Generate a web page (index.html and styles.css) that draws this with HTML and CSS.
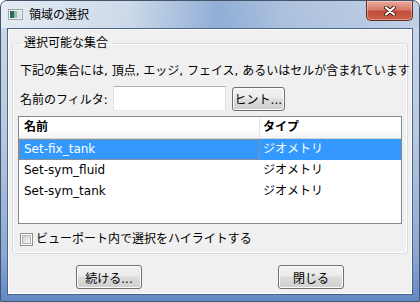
FILE: index.html
```html
<!DOCTYPE html>
<html lang="ja">
<head>
    <meta charset="UTF-8">
    <title>領域の選択</title>
    <link rel="stylesheet" href="styles.css">
</head>
<body>
    <div class="window">
        <div class="titlebar">
            <svg class="app-icon" width="15" height="11" viewBox="0 0 15 11">
                <rect x="0.5" y="0.5" width="14" height="10" fill="#eef1f3" stroke="#9aa5b0"/>
                <rect x="2" y="2" width="4" height="7" fill="#2c6b5a"/>
                <rect x="6" y="2" width="3" height="7" fill="#8fc0a8"/>
                <rect x="9" y="2" width="4" height="7" fill="#dde3e8"/>
            </svg>
            <span class="title">領域の選択</span>
            <button class="close-btn">
                <svg width="14" height="10" viewBox="0 0 14 10">
                    <path d="M3 1.5 L11 8.5 M11 1.5 L3 8.5" stroke="#4a1a14" stroke-width="4" stroke-linecap="round"/>
                    <path d="M3 1.5 L11 8.5 M11 1.5 L3 8.5" stroke="#fff" stroke-width="2.2" stroke-linecap="round"/>
                </svg>
            </button>
        </div>

        <div class="client">
            <!-- Grupo de conjuntos -->
            <fieldset class="group">
                <legend>選択可能な集合</legend>
                <p class="info">下記の集合には, 頂点, エッジ, フェイス, あるいはセルが含まれています</p>
                <div class="filter-row">
                    <label for="filter">名前のフィルタ:</label>
                    <input type="text" id="filter" class="filter-input">
                    <button class="btn btn-hint">ヒント...</button>
                </div>
                <div class="list">
                    <div class="list-header">
                        <div class="col col-name">名前</div>
                        <div class="col col-type">タイプ</div>
                    </div>
                    <div class="list-row selected">
                        <div class="col col-name focus">Set-fix_tank</div>
                        <div class="col col-type">ジオメトリ</div>
                    </div>
                    <div class="list-row">
                        <div class="col col-name">Set-sym_fluid</div>
                        <div class="col col-type">ジオメトリ</div>
                    </div>
                    <div class="list-row">
                        <div class="col col-name">Set-sym_tank</div>
                        <div class="col col-type">ジオメトリ</div>
                    </div>
                </div>
                <label class="check-row">
                    <span class="check"><span class="check-inner"></span></span>
                    <span>ビューポート内で選択をハイライトする</span>
                </label>
            </fieldset>

            <div class="actions">
                <button class="btn">続ける...</button>
                <button class="btn">閉じる</button>
            </div>
        </div>
    </div>
</body>
</html>
```

FILE: styles.css
```css
body {
    margin: 0;
    font-family: "DejaVu Sans", "Noto Sans CJK JP", sans-serif;
    font-size: 12px;
    color: #000;
    background: #fff;
    overflow: hidden;
}
.window {
    box-sizing: border-box;
    width: 420px;
    height: 302px;
    border: 1px solid #44546a;
    border-radius: 7px 7px 0 0;
    padding: 0 6px 6px;
    background: linear-gradient(180deg, #cdd9e8 0%, #b7c9e0 45%, #8aa8d3 85%, #6288c5 100%);
    display: flex;
    flex-direction: column;
    overflow: hidden;
}
.titlebar {
    height: 27px;
    display: flex;
    align-items: center;
    margin: 0 -6px;
    padding: 0 6px 0 7px;
    background: linear-gradient(90deg, rgba(236, 241, 247, 0.75) 0%, rgba(208, 221, 236, 0.5) 30%, rgba(105, 146, 202, 0.6) 52%, rgba(135, 166, 210, 0.45) 68%, rgba(178, 200, 226, 0.4) 100%);
}
.app-icon {
    flex: none;
}
.title {
    margin-left: 6px;
    line-height: 16px;
}
.close-btn {
    align-self: flex-start;
    margin-left: auto;
    width: 47px;
    height: 20px;
    padding: 0;
    border: 1px solid #6e2a20;
    border-top: none;
    border-radius: 0 0 5px 5px;
    background: linear-gradient(180deg, #e9aa9d 0%, #d77a69 45%, #c24e3a 55%, #c9614b 100%);
    box-shadow: inset 0 0 0 1px rgba(255, 255, 255, 0.35);
    display: flex;
    align-items: center;
    justify-content: center;
}
.client {
    flex: 1;
    border: 1px solid #4a6489;
    background: #f0f0f0;
    box-shadow: inset 0 0 0 1px #fff;
    overflow: hidden;
    display: flex;
    flex-direction: column;
}
.group {
    margin: 6px 4px 0;
    padding: 12px 5px 6px;
    min-width: 0;
    border: 1px solid #d5dfe5;
    border-radius: 3px;
    box-shadow: inset 0 0 0 1px #fff;
}
.group legend {
    padding: 0 4px;
    margin-left: 2px;
    line-height: 16px;
}
.info {
    margin: 0 0 0 2px;
    line-height: 16px;
    white-space: nowrap;
}
.filter-row {
    display: flex;
    align-items: center;
    height: 25px;
    margin-top: 7px;
    padding-left: 2px;
}
.filter-input {
    box-sizing: border-box;
    width: 113px;
    height: 25px;
    margin: 0 0 0 5px;
    padding: 0 3px;
    border: 1px solid #abadb3;
    border-color: #abadb3 #dbdfe6 #e3e9ef #e2e3ea;
    font: inherit;
    background: #fff;
}
.btn {
    box-sizing: border-box;
    width: 66px;
    height: 24px;
    padding: 0;
    font: inherit;
    color: #000;
    border: 1px solid #707070;
    border-radius: 3px;
    background: linear-gradient(180deg, #f2f2f2 0%, #ebebeb 45%, #dddddd 50%, #cfcfcf 100%);
    box-shadow: inset 0 0 0 1px #fcfcfc;
}
.btn-hint {
    width: 53px;
    margin-left: 6px;
}
.list {
    box-sizing: border-box;
    height: 108px;
    margin-top: 5px;
    border: 1px solid #828790;
    background: #fff;
}
.list-header,
.list-row {
    display: grid;
    grid-template-columns: 241px 1fr;
    height: 21px;
    line-height: 21px;
}
.list-header {
    height: 22px;
    box-sizing: border-box;
    border-bottom: 1px solid #d5d5d5;
    background: linear-gradient(180deg, #fff 0%, #fff 60%, #f4f5f6 100%);
    font-weight: bold;
}
.list-header .col-name {
    border-right: 1px solid #e3e4e6;
}
.col-name {
    padding-left: 5px;
}
.col-type {
    padding-left: 3px;
}
.list-row.selected {
    background: #3399ff;
    color: #fff;
}
.focus {
    outline: 1px dotted #d98c3a;
    outline-offset: -1px;
}
.check-row {
    display: flex;
    align-items: center;
    height: 16px;
    margin-top: 7px;
    padding-left: 2px;
    line-height: 16px;
}
.check {
    box-sizing: border-box;
    width: 13px;
    height: 13px;
    margin-right: 3px;
    padding: 1px;
    border: 1px solid #8e8f8f;
    background: #fff;
}
.check-inner {
    display: block;
    box-sizing: border-box;
    width: 9px;
    height: 9px;
    border: 1px solid #aeb3b9;
    background: linear-gradient(135deg, #cbcfd5 0%, #f6f6f6 100%);
}
.actions {
    display: grid;
    grid-template-columns: 1fr 1fr;
    justify-items: center;
    margin-top: 11px;
}
```
